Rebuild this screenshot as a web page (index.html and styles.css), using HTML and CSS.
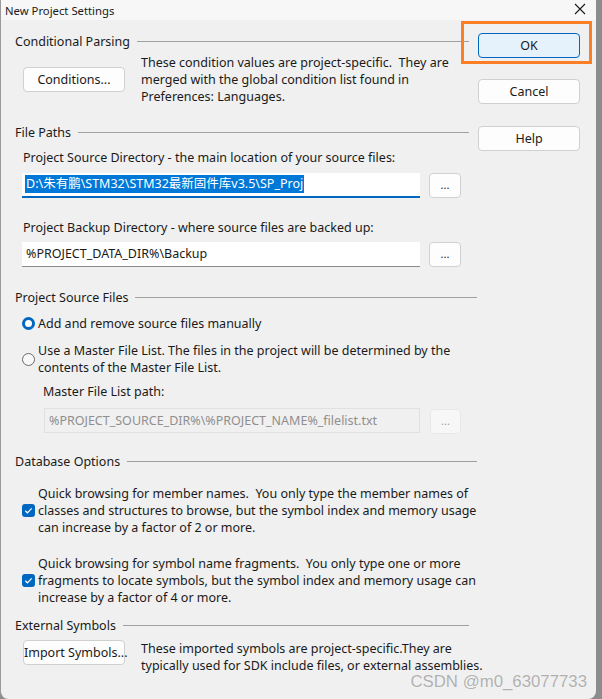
FILE: index.html
```html
<!DOCTYPE html>
<html>
<head>
<meta charset="utf-8">
<link rel="stylesheet" href="styles.css">
</head>
<body>
<div class="window">
  <div class="titlebar">
    <span class="title">New Project Settings</span>
    <svg class="close" width="12" height="12" viewBox="0 0 12 12"><path d="M1 1 L11 11 M11 1 L1 11" stroke="#1a1a1a" stroke-width="1.1" fill="none"/></svg>
  </div>
  <div class="content">
    <div class="left">
      <section class="group g1">
        <div class="ghead"><span>Conditional Parsing</span><i class="rule"></i></div>
        <div class="btnrow">
          <button class="btn wide">Conditions...</button>
          <p class="para">These condition values are project-specific.&nbsp; They are<br>merged with the global condition list found in<br>Preferences: Languages.</p>
        </div>
      </section>

      <section class="group g2">
        <div class="ghead"><span>File Paths</span><i class="rule"></i></div>
        <div class="label l1">Project Source Directory - the main location of your source files:</div>
        <div class="inrow">
          <div class="input focus"><span class="sel">D:\朱有鹏\STM32\STM32最新固件库v3.5\SP_Proj</span></div>
          <button class="btn dots">...</button>
        </div>
        <div class="label l2">Project Backup Directory - where source files are backed up:</div>
        <div class="inrow r2">
          <div class="input">%PROJECT_DATA_DIR%\Backup</div>
          <button class="btn dots">...</button>
        </div>
      </section>

      <section class="group g3">
        <div class="ghead"><span>Project Source Files</span><i class="rule"></i></div>
        <div class="opt o1"><span class="radio on"></span><span>Add and remove source files manually</span></div>
        <div class="opt o2"><span class="radio"></span><span>Use a Master File List. The files in the project will be determined by the<br>contents of the Master File List.</span></div>
        <div class="label l3">Master File List path:</div>
        <div class="inrow r3">
          <div class="input dis">%PROJECT_SOURCE_DIR%\%PROJECT_NAME%_filelist.txt</div>
          <button class="btn dots disb">...</button>
        </div>
      </section>

      <section class="group g4">
        <div class="ghead"><span>Database Options</span><i class="rule"></i></div>
        <div class="opt c1"><span class="check"><svg width="13" height="13" viewBox="0 0 13 13"><path d="M3.3 6.8 L5.4 8.8 L9.7 4.4" stroke="#fff" stroke-width="1.2" fill="none"/></svg></span><span>Quick browsing for member names.&nbsp; You only type the member names of<br>classes and structures to browse, but the symbol index and memory usage<br>can increase by a factor of 2 or more.</span></div>
        <div class="opt c2"><span class="check"><svg width="13" height="13" viewBox="0 0 13 13"><path d="M3.3 6.8 L5.4 8.8 L9.7 4.4" stroke="#fff" stroke-width="1.2" fill="none"/></svg></span><span>Quick browsing for symbol name fragments.&nbsp; You only type one or more<br>fragments to locate symbols, but the symbol index and memory usage can<br>increase by a factor of 4 or more.</span></div>
      </section>

      <section class="group g5">
        <div class="ghead"><span>External Symbols</span><i class="rule"></i></div>
        <div class="btnrow b5">
          <button class="btn wide imp">Import Symbols...</button>
          <p class="para">These imported symbols are project-specific.They are<br>typically used for SDK include files, or external assemblies.</p>
        </div>
      </section>
    </div>
    <div class="right">
      <button class="btn side ok">OK</button>
      <button class="btn side cancel">Cancel</button>
      <button class="btn side help">Help</button>
      <div class="highlight"></div>
    </div>
  </div>
  <div class="watermark">CSDN @m0_63077733</div>
</div>
</body>
</html>
```
FILE: styles.css
```css
html, body {
  margin: 0;
  padding: 0;
}
body {
  width: 602px;
  height: 699px;
  background: #8c8c8c;
  overflow: hidden;
  font-family: "Noto Sans", "Noto Sans CJK SC", sans-serif;
  font-size: 12.5px;
  color: #1a1a1a;
}
.window {
  position: relative;
  width: 596px;
  height: 699px;
  box-sizing: border-box;
  background: #f0f0f0;
  border-left: 1px solid #9a9a9a;
  border-radius: 0 0 8px 8px;
  overflow: hidden;
}
.titlebar {
  height: 20px;
  background: #f7f7f7;
  display: flex;
  align-items: center;
  justify-content: space-between;
  padding: 0 10px 0 4px;
}
.title {
  font-size: 11.3px;
  line-height: 17px;
}
.close {
  margin-top: -2px;
}
.content {
  display: flex;
  padding-left: 14px;
}
.left {
  width: 463px;
  flex: none;
}
.right {
  position: relative;
  display: flex;
  flex-direction: column;
  padding-top: 13px;
}
.group {
  line-height: 17px;
}
.ghead {
  display: flex;
  align-items: center;
  height: 17px;
}
.ghead span {
  white-space: nowrap;
}
.rule {
  flex: 1;
  height: 1px;
  background: #a0a0a0;
  margin-left: 7px;
}
.g1 { margin-top: 12.5px; width: 454px; }
.g2 { margin-top: 19px; width: 454px; }
.g3 { margin-top: 22.5px; width: 462px; }
.g4 { margin-top: 19.5px; width: 462px; }
.g5 { margin-top: 10.5px; width: 454px; }

.btnrow {
  display: flex;
  align-items: flex-start;
  margin-top: 4.5px;
  padding-left: 8px;
}
.b5 { margin-top: 6px; }
.para {
  margin: 0 0 0 16px;
  white-space: nowrap;
}
.btn {
  font: inherit;
  color: #1a1a1a;
  background: #fdfdfd;
  border: 1px solid #d0d0d0;
  border-radius: 4px;
  padding: 0;
  box-sizing: border-box;
  height: 25px;
}
.wide {
  width: 102px;
  margin-top: 12.5px;
  flex: none;
}
.imp {
  margin-top: 0.5px;
  white-space: nowrap;
  padding: 0;
}
.label {
  padding-left: 8px;
  white-space: nowrap;
}
.l1 { margin-top: 8px; }
.l2 { margin-top: 21.5px; }
.l3 { margin-top: 6.5px; padding-left: 28px; }
.inrow {
  display: flex;
  align-items: flex-start;
  margin-top: 6.5px;
  padding-left: 7px;
}
.r2 { margin-top: 5.5px; }
.r3 { margin-top: 8px; padding-left: 29px; }
.input {
  flex: 1;
  height: 25px;
  box-sizing: border-box;
  background: #ffffff;
  border-bottom: 1px solid #8a8a8a;
  padding: 0 4px;
  display: flex;
  align-items: center;
  white-space: nowrap;
  overflow: hidden;
  max-width: 398px;
}
.r3 .input { max-width: 376px; }
.input.focus {
  border-bottom: 2px solid #0067c0;
  padding-left: 3px;
}
.sel {
  background: #0078d7;
  color: #ffffff;
  line-height: 18px;
  padding: 0 1px;
}
.input.dis {
  background: #f0f0f0;
  border: 1px solid #e0e0e0;
  color: #8f8f8f;
}
.dots {
  width: 32px;
  margin-left: 9px;
  flex: none;
  font-size: 11px;
  line-height: 20px;
}
.disb {
  margin-left: 10px;
  margin-top: 1px;
  background: #f7f7f7;
  border-color: #e8e8e8;
  color: #a0a0a0;
  width: 31px;
}
.opt {
  display: flex;
  align-items: center;
  padding-left: 7px;
  white-space: nowrap;
}
.o1 { margin-top: 9px; }
.o2 { margin-top: 10px; }
.c1 { margin-top: 15px; }
.c2 { margin-top: 19px; }
.radio {
  width: 13px;
  height: 13px;
  box-sizing: border-box;
  border-radius: 50%;
  border: 1px solid #6a6a6a;
  background: #f8f8f8;
  margin-right: 3px;
  flex: none;
}
.radio.on {
  border: 3.5px solid #0067c0;
  background: #ffffff;
}
.check {
  width: 13px;
  height: 13px;
  border-radius: 3px;
  background: #0067c0;
  margin-right: 3px;
  flex: none;
  display: flex;
}
.side {
  width: 102px;
  margin-bottom: 21px;
}
.ok {
  background: #e5f1fb;
  border-color: #0067c0;
}
.cancel { margin-top: 0; }
.help { margin-top: 1px; }
.highlight {
  position: absolute;
  left: -17px;
  top: 1px;
  width: 131px;
  height: 43px;
  box-sizing: border-box;
  border: 3px solid #fc7e25;
}
.watermark {
  position: absolute;
  right: 9px;
  bottom: 11px;
  font-family: "Liberation Sans", Arial, sans-serif;
  font-size: 16.8px;
  line-height: 13px;
  color: #b0b0b0;
  text-shadow: 0 0 1px #ffffff;
}
```
